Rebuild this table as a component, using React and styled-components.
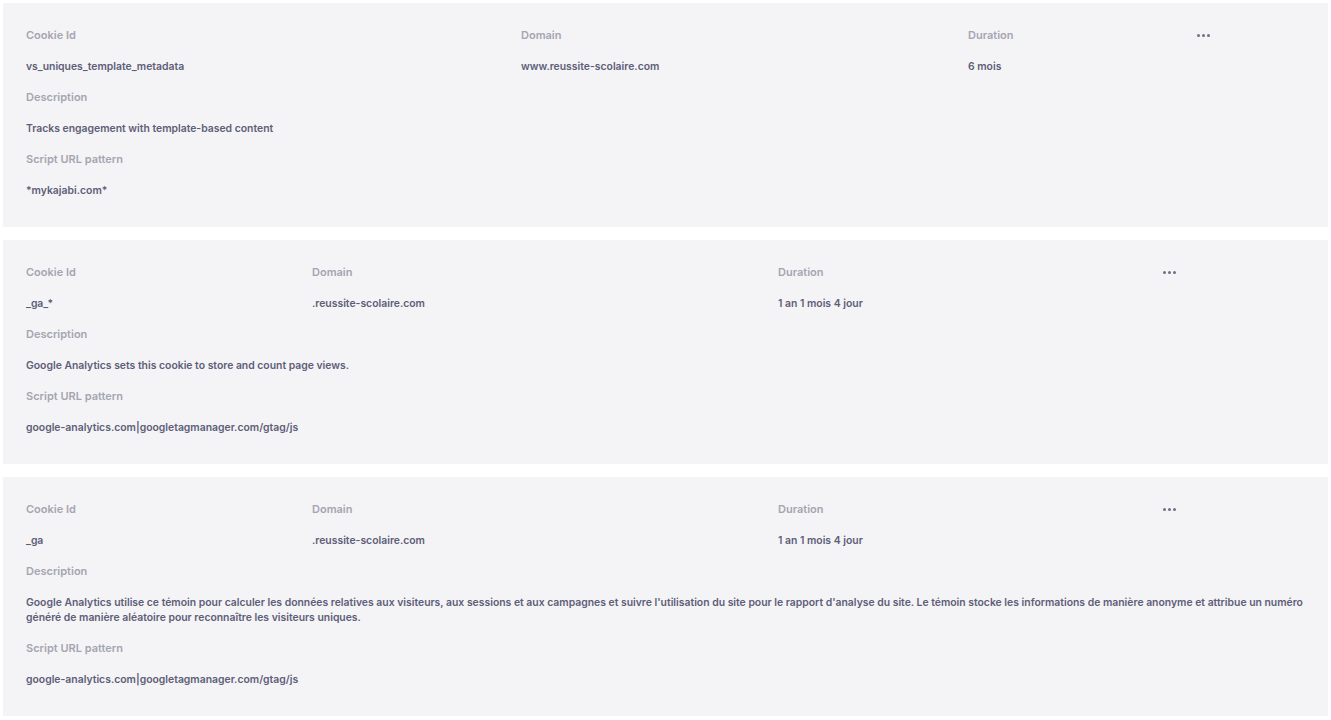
import React from "react";
import styled, { createGlobalStyle } from "styled-components";

const Global = createGlobalStyle`
  html, body { margin: 0; padding: 0; background: #ffffff; }
  body { font-family: Inter, "Noto Sans", sans-serif; -webkit-font-smoothing: antialiased; }
`;

const Page = styled.div`
  display: flex;
  flex-direction: column;
  gap: 13px;
  padding: 3px;
`;

const Card = styled.section`
  background: #f4f4f6;
  padding: 25px 23px 29px 23px;
  display: flex;
  flex-direction: column;
  gap: 16px;
`;

const Row = styled.div`
  display: grid;
  grid-template-columns: ${(p) => p.$cols};
  gap: 16px 0;
`;

const Label = styled.div`
  font-size: 11px;
  line-height: 15px;
  font-weight: 600;
  color: #a5a5b1;
`;

const Value = styled.div`
  font-size: 10.4px;
  line-height: 15px;
  font-weight: 600;
  color: #5e5e78;
`;

const Dots = styled.button`
  display: flex;
  align-items: center;
  gap: 2px;
  height: 15px;
  padding: 0;
  border: 0;
  background: none;
  cursor: pointer;
  span {
    width: 3px;
    height: 3px;
    border-radius: 50%;
    background: #6f6f86;
  }
`;

const cookies = [
  {
    cols: "495px 447px 229px 1fr",
    id: "vs_uniques_template_metadata",
    domain: "www.reussite-scolaire.com",
    duration: "6 mois",
    description: "Tracks engagement with template-based content",
    pattern: "*mykajabi.com*",
  },
  {
    cols: "286px 466px 385px 1fr",
    id: "_ga_*",
    domain: ".reussite-scolaire.com",
    duration: "1 an 1 mois 4 jour",
    description: "Google Analytics sets this cookie to store and count page views.",
    pattern: "google-analytics.com|googletagmanager.com/gtag/js",
  },
  {
    cols: "286px 466px 385px 1fr",
    id: "_ga",
    domain: ".reussite-scolaire.com",
    duration: "1 an 1 mois 4 jour",
    description:
      "Google Analytics utilise ce témoin pour calculer les données relatives aux visiteurs, aux sessions et aux campagnes et suivre l'utilisation du site pour le rapport d'analyse du site. Le témoin stocke les informations de manière anonyme et attribue un numéro généré de manière aléatoire pour reconnaître les visiteurs uniques.",
    pattern: "google-analytics.com|googletagmanager.com/gtag/js",
  },
];

export default function App() {
  return (
    <>
      <Global />
      <Page>
        {cookies.map((c) => (
          <Card key={c.id}>
            <Row $cols={c.cols}>
              <Label>Cookie Id</Label>
              <Label>Domain</Label>
              <Label>Duration</Label>
              <Dots aria-label="More">
                <span />
                <span />
                <span />
              </Dots>
              <Value>{c.id}</Value>
              <Value>{c.domain}</Value>
              <Value>{c.duration}</Value>
              <div />
            </Row>
            <Label>Description</Label>
            <Value>{c.description}</Value>
            <Label>Script URL pattern</Label>
            <Value>{c.pattern}</Value>
          </Card>
        ))}
      </Page>
    </>
  );
}
